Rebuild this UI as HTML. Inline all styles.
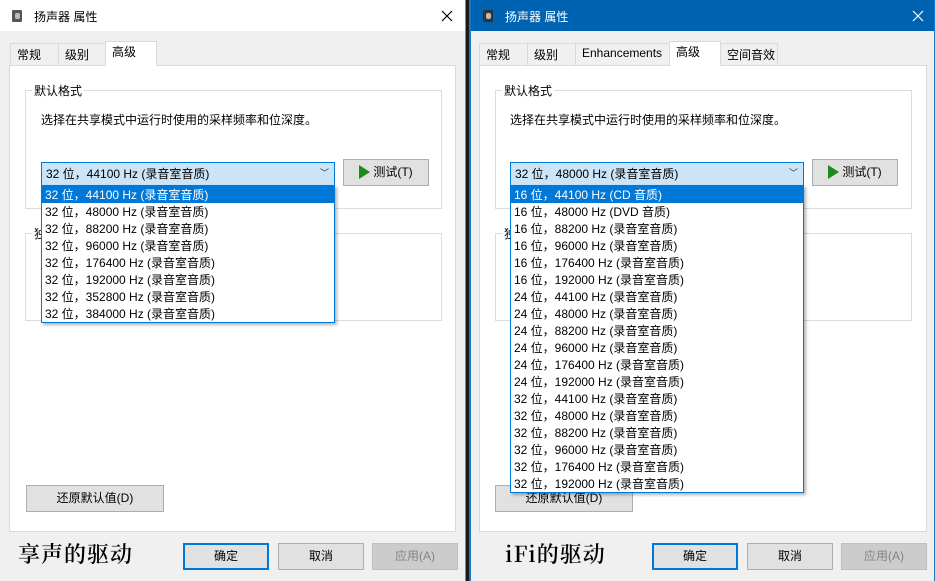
<!DOCTYPE html>
<html><head><meta charset="utf-8"><style>
*{margin:0;padding:0;box-sizing:border-box}
body{width:935px;height:581px;overflow:hidden;background:#1a1a1a;font-family:"Liberation Sans","Noto Sans CJK SC",sans-serif;font-size:12px;color:#000;position:relative}
.a{position:absolute}
.win{position:absolute;top:0;height:581px;background:#f0f0f0;overflow:hidden}
.title{position:absolute;left:0;top:0;right:0;height:31px;font-size:12px}
.title .t{position:absolute;left:34px;top:8px}
.title svg{position:absolute;right:12px;top:10px}
.ico{position:absolute;left:12px;top:10px;width:10px;height:12px;background:#555;border-radius:1px}
.ico:after{content:"";position:absolute;left:3px;top:3px;width:5px;height:6px;background:#bbb;border-radius:2px}
.tab{position:absolute;top:43px;height:22px;border:1px solid #d9d9d9;border-bottom:none;background:#f0f0f0;padding:2px 6px 0;white-space:nowrap;font-size:12px}
.tab.sel{top:41px;height:25px;background:#fff;z-index:2;padding-top:1px}
.panel{position:absolute;top:65px;height:467px;background:#fff;border:1px solid #d9d9d9}
.grp{position:absolute;border:1px solid #dcdcdc}
.glab{position:absolute;background:#fff;padding:0 2px;font-size:12px}
.btn{position:absolute;height:27px;background:#e1e1e1;border:1px solid #adadad;text-align:center;line-height:25px;font-size:12px}
.combo{position:absolute;top:162px;height:24px;background:#cce4f7;border:1px solid #0078d7;padding:2px 0 0 4px;font-size:12px}
.combo .ar{position:absolute;right:5px;top:3px;color:#333;font-size:9px}
.list{position:absolute;top:185px;background:#fff;border:1px solid #0078d7;box-shadow:2px 2px 3px rgba(0,0,0,.3);z-index:5}
.list div{height:17px;line-height:18px;padding-left:3px;white-space:nowrap;font-size:12px}
.list .s{background:#0078d7;color:#fff}
.cap{position:absolute;top:538px;font-family:"Noto Serif CJK SC","Liberation Serif",serif;font-size:22px;letter-spacing:1px;font-weight:600}
.play{display:inline-block;width:0;height:0;border-top:7px solid transparent;border-bottom:7px solid transparent;border-left:11px solid #1c8c1c;vertical-align:-3px;margin-right:3px}
</style></head><body>

<!-- LEFT WINDOW -->
<div class="win" style="left:0;width:466px;border-right:1px solid #888">
 <div class="title" style="background:#fff"><div class="ico"></div><div class="t">扬声器 属性</div><svg width="12" height="12"><path d="M1 1L11 11M11 1L1 11" stroke="#000" stroke-width="1.2"/></svg></div>
 <div class="tab" style="left:10px;width:49px">常规</div>
 <div class="tab" style="left:58px;width:48px">级别</div>
 <div class="tab sel" style="left:105px;width:52px">高级</div>
 <div class="panel" style="left:9px;width:447px"></div>
 <div class="grp" style="left:25px;top:90px;width:417px;height:119px"></div>
 <div class="glab" style="left:32px;top:82px">默认格式</div>
 <div class="a" style="left:41px;top:111px">选择在共享模式中运行时使用的采样频率和位深度。</div>
 <div class="combo" style="left:41px;width:294px">32 位，44100 Hz (录音室音质)<span class="ar">﹀</span></div>
 <div class="btn" style="left:343px;top:159px;width:86px"><span class="play"></span>测试(T)</div>
 <div class="grp" style="left:25px;top:233px;width:417px;height:88px"></div>
 <div class="glab" style="left:32px;top:225px">独占模式</div>
 <div class="list" style="left:41px;width:294px">
  <div class="s">32 位，44100 Hz (录音室音质)</div>
  <div>32 位，48000 Hz (录音室音质)</div>
  <div>32 位，88200 Hz (录音室音质)</div>
  <div>32 位，96000 Hz (录音室音质)</div>
  <div>32 位，176400 Hz (录音室音质)</div>
  <div>32 位，192000 Hz (录音室音质)</div>
  <div>32 位，352800 Hz (录音室音质)</div>
  <div>32 位，384000 Hz (录音室音质)</div>
 </div>
 <div class="btn" style="left:26px;top:485px;width:138px">还原默认值(D)</div>
 <div class="cap" style="left:18px">享声的驱动</div>
 <div class="btn" style="left:183px;top:543px;width:86px;border:2px solid #0078d7;line-height:23px">确定</div>
 <div class="btn" style="left:278px;top:543px;width:86px">取消</div>
 <div class="btn" style="left:372px;top:543px;width:86px;background:#ccc;border-color:#bfbfbf;color:#838383">应用(A)</div>
</div>

<!-- RIGHT WINDOW -->
<div class="win" style="left:469px;width:466px;border-left:2px solid #1979ca;border-right:1px solid #1979ca">
 <div class="title" style="background:#0063b1;color:#fff"><div class="ico" style="left:12px;background:#333"></div><div class="t">扬声器 属性</div><svg width="12" height="12" style="right:10px"><path d="M1 1L11 11M11 1L1 11" stroke="#fff" stroke-width="1.2"/></svg></div>
 <div class="tab" style="left:8px;width:49px">常规</div>
 <div class="tab" style="left:56px;width:49px">级别</div>
 <div class="tab" style="left:104px;width:95px">Enhancements</div>
 <div class="tab sel" style="left:198px;width:52px">高级</div>
 <div class="tab" style="left:249px;width:58px">空间音效</div>
 <div class="panel" style="left:8px;width:448px"></div>
 <div class="grp" style="left:24px;top:90px;width:417px;height:119px"></div>
 <div class="glab" style="left:31px;top:82px">默认格式</div>
 <div class="a" style="left:39px;top:111px">选择在共享模式中运行时使用的采样频率和位深度。</div>
 <div class="combo" style="left:39px;width:294px">32 位，48000 Hz (录音室音质)<span class="ar">﹀</span></div>
 <div class="btn" style="left:341px;top:159px;width:86px"><span class="play"></span>测试(T)</div>
 <div class="grp" style="left:24px;top:233px;width:417px;height:88px"></div>
 <div class="glab" style="left:31px;top:225px">独占模式</div>
 <div class="btn" style="left:24px;top:485px;width:138px">还原默认值(D)</div>
 <div class="list" style="left:39px;width:294px">
  <div class="s">16 位，44100 Hz (CD 音质)</div>
  <div>16 位，48000 Hz (DVD 音质)</div>
  <div>16 位，88200 Hz (录音室音质)</div>
  <div>16 位，96000 Hz (录音室音质)</div>
  <div>16 位，176400 Hz (录音室音质)</div>
  <div>16 位，192000 Hz (录音室音质)</div>
  <div>24 位，44100 Hz (录音室音质)</div>
  <div>24 位，48000 Hz (录音室音质)</div>
  <div>24 位，88200 Hz (录音室音质)</div>
  <div>24 位，96000 Hz (录音室音质)</div>
  <div>24 位，176400 Hz (录音室音质)</div>
  <div>24 位，192000 Hz (录音室音质)</div>
  <div>32 位，44100 Hz (录音室音质)</div>
  <div>32 位，48000 Hz (录音室音质)</div>
  <div>32 位，88200 Hz (录音室音质)</div>
  <div>32 位，96000 Hz (录音室音质)</div>
  <div>32 位，176400 Hz (录音室音质)</div>
  <div>32 位，192000 Hz (录音室音质)</div>
 </div>
 <div class="cap" style="left:34px">iFi的驱动</div>
 <div class="btn" style="left:181px;top:543px;width:86px;border:2px solid #0078d7;line-height:23px">确定</div>
 <div class="btn" style="left:276px;top:543px;width:86px">取消</div>
 <div class="btn" style="left:370px;top:543px;width:86px;background:#ccc;border-color:#bfbfbf;color:#838383">应用(A)</div>
</div>
</body></html>
